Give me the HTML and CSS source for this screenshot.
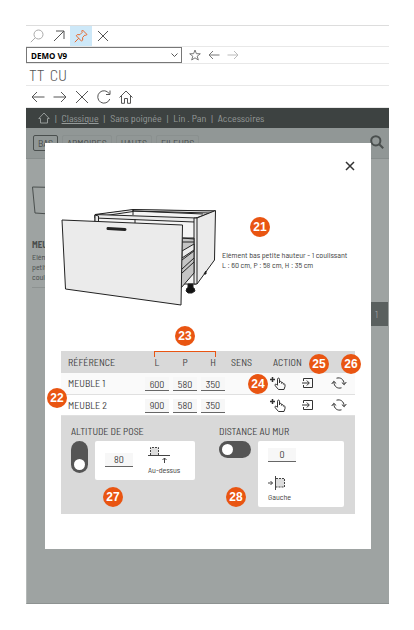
FILE: index.html
```
<!DOCTYPE html>
<html lang="fr">
<head>
    <meta charset="UTF-8">
    <meta name="viewport" content="width=device-width, initial-scale=1.0">
    <title>Catalogue - DEMO V9</title>
    <link rel="stylesheet" href="styles.css">
</head>
<body>
    <!-- Shared icons of the table rows -->
    <svg class="sprite" aria-hidden="true">
        <symbol id="icon-hand" viewBox="0 0 16 14">
            <path d="M0 3.500h5M2.500 1v5" stroke-width="1.500"/>
            <path d="M7.500 9V3.200c0-1.500 2-1.500 2 0V6.500M9.500 7V6c.3-1 2-.8 2 .3V7.500M11.500 7.200c.3-1 1.800-.7 1.800.3v.8c.4-.8 1.700-.5 1.700.5v1.700l-1 3H8.500L5.300 9.800c-1-1.200.3-2.200 1.300-1.300l1 1"/>
        </symbol>
        <symbol id="icon-insert" viewBox="0 0 12 12">
            <path d="M1.500 4V1.500h9v9h-9V8M0 6h7M4.800 3.500L7.300 6L4.800 8.500"/>
        </symbol>
        <symbol id="icon-swap" viewBox="0 0 16 12">
            <path d="M5.500 1.200C9.500 0 13 2.300 13.200 7.300M10.800 5.500l2.400 2.200L15.300 5M10.500 10.800C6.500 12 3 9.700 2.800 4.700M.7 7L2.800 4.300l2.400 2.200"/>
        </symbol>
    </svg>

    <div class="app">
        <div class="toolbar toolbar-window">
            <button class="tool tool-light" aria-label="Rechercher">
                <svg width="14" height="14" viewBox="0 0 14 14"><circle cx="8.500" cy="5.500" r="4.500"/><path d="M5.300 8.700L.8 13.200"/></svg>
            </button>
            <button class="tool" aria-label="Agrandir">
                <svg width="12" height="12" viewBox="0 0 12 12"><path d="M1 11L11 1M3 1h8v8"/></svg>
            </button>
            <button class="tool tool-pinned" aria-label="Épingler">
                <svg width="14" height="14" viewBox="0 0 14 14"><path d="M8.500 1l4.500 4.500-1.300.8-.9-.2-2.200 2.400.1 2.600-1.200 1L2.300 6.800l1-1.200 2.600.1L8.200 3.400 7.800 2.200zM4.800 9.200L.8 13.200"/></svg>
            </button>
            <button class="tool" aria-label="Fermer">
                <svg width="12" height="12" viewBox="0 0 12 12"><path d="M1 1l10 10M11 1L1 11"/></svg>
            </button>
        </div>

        <div class="toolbar toolbar-catalog">
            <select class="catalog-select" aria-label="Catalogue">
                <option>DEMO V9</option>
            </select>
            <button class="tool-small" aria-label="Favori">
                <svg width="12" height="12" viewBox="0 0 12 12"><path d="M6 1l1.400 3.700 3.900.1-3.100 2.400 1.100 3.800L6 8.800 2.700 11l1.100-3.800L.7 4.800l3.900-.1z"/></svg>
            </button>
            <button class="tool-small" aria-label="Précédent">
                <svg width="12" height="10" viewBox="0 0 12 10"><path d="M11.500 5H1M5 1L1 5l4 4"/></svg>
            </button>
            <button class="tool-small tool-light" aria-label="Suivant">
                <svg width="12" height="10" viewBox="0 0 12 10"><path d="M.5 5H11M7 1l4 4-4 4"/></svg>
            </button>
        </div>

        <div class="toolbar toolbar-tabs">
            <button class="tab">TT</button>
            <button class="tab">CU</button>
        </div>

        <div class="toolbar toolbar-browser">
            <button class="tool-nav" aria-label="Page précédente">
                <svg width="14" height="12" viewBox="0 0 14 12"><path d="M13.500 6H1M6 1L1 6l5 5"/></svg>
            </button>
            <button class="tool-nav" aria-label="Page suivante">
                <svg width="14" height="12" viewBox="0 0 14 12"><path d="M.5 6H13M8 1l5 5-5 5"/></svg>
            </button>
            <button class="tool-nav" aria-label="Arrêter">
                <svg width="14" height="14" viewBox="0 0 14 14"><path d="M1 1l12 12M13 1L1 13"/></svg>
            </button>
            <button class="tool-nav" aria-label="Actualiser">
                <svg width="14" height="14" viewBox="0 0 14 14"><path d="M12.800 9A6.200 6.200 0 1 1 12.300 3.800M13 .5V4.500H9"/></svg>
            </button>
            <button class="tool-nav" aria-label="Accueil">
                <svg width="14" height="14" viewBox="0 0 14 14"><path d="M.5 7.500L7 1l6.500 6.500M2.500 6v7.300h3V8.500h3v4.800h3V6"/></svg>
            </button>
        </div>

        <nav class="menu">
            <a class="menu-home" href="#" aria-label="Accueil">
                <svg width="12" height="12" viewBox="0 0 12 12"><path d="M.8 6.500L6 1l5.200 5.500H9.500V11h-7V6.500z"/></svg>
            </a>
            <span>|</span>
            <a class="active" href="#">Classique</a>
            <span>|</span>
            <a href="#">Sans poignée</a>
            <span>|</span>
            <a href="#">Lin . Pan</a>
            <span>|</span>
            <a href="#">Accessoires</a>
        </nav>

        <div class="filters">
            <button class="filter selected">BAS</button>
            <button class="filter">ARMOIRES</button>
            <button class="filter">HAUTS</button>
            <button class="filter">FILEURS</button>
            <button class="search" aria-label="Rechercher">
                <svg width="14" height="14" viewBox="0 0 14 14"><circle cx="5.800" cy="5.800" r="4.600"/><path d="M9.200 9.200l4 4"/></svg>
            </button>
        </div>

        <main class="catalog">
            <div class="item">
                <svg class="item-image" width="48" height="30" viewBox="0 0 48 30"><path d="M.5 1L48 2v28L3 27z"/></svg>
                <h2>MEUBLE</h2>
                <p>Elément bas petite hauteur - 1 coulissant</p>
            </div>
            <span class="counter">1</span>
        </main>

        <div class="modal" role="dialog" aria-label="Elément bas petite hauteur">
            <button class="close" aria-label="Fermer">
                <svg width="10" height="10" viewBox="0 0 10 10"><path d="M1 1l8 8M9 1L1 9"/></svg>
            </button>

            <div class="product">
                <svg class="product-image" width="156" height="100" viewBox="0 0 156 100">
                    <!-- cabinet body -->
                    <path class="inside" d="M34 8L72 3 154 4 135 11V77H121L34 22z"/>
                    <path class="panel" d="M72 2.500l82 1.500-5 2-77-2z"/>
                    <path class="panel" d="M34 7.500L72 2.500v2L42 9z"/>
                    <path class="panel" d="M34 7.500l102 3.500-3 4L34 11z"/>
                    <path class="panel" d="M34 8v13h3.500V9z"/>
                    <path class="line" d="M72 3v5M72 4l70 3M74 12v10"/>
                    <path class="panel" d="M136 11l18.500-7.500L153.500 53L136 77h-3V11z"/>
                    <path class="line" d="M136 11v66"/>
                    <!-- drawer box and slides -->
                    <path class="slide" d="M121 31h12v35l-13 15z"/>
                    <path class="panel" d="M121 44l12-7v6l-12 8z"/>
                    <path class="line" d="M121 31l12 1M121 35h12M121 53l12-9M121 62l12-11M121 66l12-11"/>
                    <!-- feet -->
                    <path class="foot" d="M127 77h5v4h1l1 3-3 2h-4l-2-2 1-3h1zM143 67l2-3v3z"/>
                    <!-- front -->
                    <path class="front" d="M1 13l120.500 5L120 98 4.500 82z"/>
                    <path class="handle" d="M47 21.500l17 1"/>
                </svg>
                <div class="product-text">
                    <span class="mark">21</span>
                    <p>Elément bas petite hauteur - 1 coulissant<br>L : 60 cm, P : 58 cm, H : 35 cm</p>
                </div>
            </div>

            <table class="parts">
                <colgroup>
                    <col>
                    <col class="col-size"><col class="col-size"><col class="col-size">
                    <col class="col-side">
                    <col class="col-action"><col class="col-action"><col class="col-swap">
                </colgroup>
                <thead>
                    <tr>
                        <th class="ref">RÉFÉRENCE</th>
                        <th>L</th>
                        <th class="anchor">P<span class="bracket"></span><span class="mark mark-sizes">23</span></th>
                        <th>H</th>
                        <th class="side">SENS</th>
                        <th class="anchor action" colspan="3">ACTION<span class="mark mark-insert">25</span><span class="mark mark-swap">26</span></th>
                    </tr>
                </thead>
                <tbody>
                    <tr>
                        <td class="ref">MEUBLE 1</td>
                        <td><input type="text" value="600" aria-label="L meuble 1"></td>
                        <td><input type="text" value="580" aria-label="P meuble 1"></td>
                        <td><input type="text" value="350" aria-label="H meuble 1"></td>
                        <td></td>
                        <td class="anchor"><span class="mark mark-place">24</span><button class="row-action" aria-label="Placer"><svg width="16" height="14"><use href="#icon-hand"/></svg></button></td>
                        <td><button class="row-action" aria-label="Insérer"><svg width="12" height="12"><use href="#icon-insert"/></svg></button></td>
                        <td><button class="row-action" aria-label="Remplacer"><svg width="16" height="12"><use href="#icon-swap"/></svg></button></td>
                    </tr>
                    <tr>
                        <td class="ref anchor"><span class="mark mark-ref">22</span>MEUBLE 2</td>
                        <td><input type="text" value="900" aria-label="L meuble 2"></td>
                        <td><input type="text" value="580" aria-label="P meuble 2"></td>
                        <td><input type="text" value="350" aria-label="H meuble 2"></td>
                        <td></td>
                        <td><button class="row-action" aria-label="Placer"><svg width="16" height="14"><use href="#icon-hand"/></svg></button></td>
                        <td><button class="row-action" aria-label="Insérer"><svg width="12" height="12"><use href="#icon-insert"/></svg></button></td>
                        <td><button class="row-action" aria-label="Remplacer"><svg width="16" height="12"><use href="#icon-swap"/></svg></button></td>
                    </tr>
                </tbody>
            </table>

            <div class="settings">
                <section class="setting">
                    <label class="setting-title" for="altitude">ALTITUDE DE POSE</label>
                    <div class="setting-body anchor">
                        <input class="switch vertical" type="checkbox" id="altitude">
                        <div class="card">
                            <input type="text" value="80" aria-label="Altitude">
                            <div class="position">
                                <svg width="22" height="18" viewBox="0 0 22 18"><path class="box" d="M2.500 9V1.500h8V9"/><path d="M0 9.500h22M16.500 17v-5M14.500 14l2-2 2 2"/></svg>
                                <span>Au-dessus</span>
                            </div>
                        </div>
                        <span class="mark mark-altitude">27</span>
                    </div>
                </section>
                <section class="setting">
                    <label class="setting-title" for="distance">DISTANCE AU MUR</label>
                    <div class="setting-body anchor">
                        <input class="switch" type="checkbox" id="distance">
                        <div class="card card-column">
                            <input type="text" value="0" aria-label="Distance">
                            <div class="position">
                                <svg width="18" height="14" viewBox="0 0 18 14"><path class="box" d="M8 2.500h8.500v8.500H8"/><path d="M7.500 0v14M0 7h4.500M2.500 5l2 2-2 2"/></svg>
                                <span>Gauche</span>
                            </div>
                        </div>
                        <span class="mark mark-distance">28</span>
                    </div>
                </section>
            </div>
        </div>
    </div>
</body>
</html>
```

FILE: styles.css
```
* {
    margin: 0;
    padding: 0;
    box-sizing: border-box;
}

body {
    background: #fff;
    color: #444;
    font-family: "Barlow Semi Condensed", "Liberation Sans Narrow", Roboto, sans-serif;
    font-size: 8px;
    line-height: 10px;
    min-height: 100vh;
    padding: 25px 25px 26px 26px;
    display: flex;
}

button, input, select {
    font-family: inherit;
    color: inherit;
    background: none;
    border: none;
}

a {
    color: inherit;
    text-decoration: none;
}

svg {
    display: block;
    fill: none;
    stroke: currentColor;
}

.sprite {
    position: absolute;
    width: 0;
    height: 0;
}

.app {
    position: relative;
    flex: 1;
    display: flex;
    flex-direction: column;
    border-top: 1px solid #ddd;
}

/* toolbars */
.toolbar {
    display: flex;
    align-items: center;
    border-bottom: 1px solid #e8e8e8;
    color: #555;
}

.toolbar-window {
    height: 21px;
}

.tool {
    width: 22px;
    height: 20px;
    display: grid;
    place-items: center;
}

.tool-light {
    color: #aaa;
}

.tool-pinned {
    background: #cde8f8;
    color: #e8692f;
}

.toolbar-catalog {
    height: 17px;
    gap: 7px;
}

.catalog-select {
    width: 156px;
    height: 16px;
    border: 1px solid #777;
    padding: 0 4px;
    font-family: "Open Sans", sans-serif;
    font-size: 8px;
    font-weight: bold;
    color: #000;
    appearance: none;
    background: url("data:image/svg+xml,%3Csvg xmlns='http://www.w3.org/2000/svg' width='7' height='4'%3E%3Cpath d='M.5.5l3 3 3-3' fill='none' stroke='%23555'/%3E%3C/svg%3E") no-repeat right 3px center;
}

.tool-small {
    color: #777;
}

.tool-small.tool-light {
    color: #bbb;
}

.toolbar-tabs {
    height: 22px;
    padding-left: 3px;
    gap: 5px;
}

.tab {
    font-size: 16px;
    font-weight: 300;
}

.toolbar-browser {
    height: 22px;
    padding-left: 5px;
    gap: 8px;
}

/* catalogue page behind the dialog */
.menu {
    height: 20px;
    display: flex;
    align-items: center;
    gap: 5px;
    padding-left: 12px;
    background: #3d4241;
    color: #969b9a;
    font-size: 10px;
}

.menu .active {
    text-decoration: underline;
}

.filters {
    height: 31px;
    display: flex;
    align-items: flex-start;
    gap: 4px;
    padding: 7px 5px 0 7px;
    background: #919796;
    border-bottom: 1px solid #878d8c;
    color: #4a4f4e;
}

.filter {
    height: 16px;
    padding: 0 4px;
    border: 1px solid #8a908f;
    border-radius: 2px;
    font-size: 10px;
}

.filter.selected {
    border-color: #4a4f4e;
}

.search {
    margin-left: auto;
}

.search svg {
    stroke-width: 2;
}

.catalog {
    position: relative;
    flex: 1;
    background: #9ea3a2;
    border-left: 1px solid #b4b8b7;
    border-bottom: 1px solid #8d9291;
    padding: 27px 5px;
    color: #4a4f4e;
}

.item {
    width: 56px;
    border-bottom: 1px solid #8d9291;
    padding-bottom: 5px;
}

.item-image {
    margin-bottom: 22px;
}

.item h2 {
    font-size: 9px;
    line-height: 14px;
}

.counter {
    position: absolute;
    top: 143px;
    right: 1px;
    width: 17px;
    background: #5a605f;
    color: #969b9a;
    font-size: 10px;
    line-height: 24px;
    padding-left: 4px;
}

/* dialog */
.modal {
    position: absolute;
    top: 117px;
    left: 19px;
    right: 18px;
    background: #fff;
    padding: 18px 16px 35px;
}

.close {
    display: block;
    margin: 0 0 36px auto;
    color: #333;
}

.close svg {
    stroke-width: 1.5;
}

.product {
    display: flex;
    gap: 5px;
    margin-bottom: 44px;
}

.product-image {
    flex-shrink: 0;
    stroke: #222;
    stroke-width: 1;
    stroke-linejoin: round;
}

.inside, .panel, .front {
    fill: #ebebeb;
}

.inside {
    fill: #f4f4f4;
}

.slide {
    fill: #c4c4c4;
}

.foot {
    fill: #111;
}

.handle {
    stroke-width: 3;
    stroke-linecap: round;
}

.product-text {
    padding-top: 10px;
    white-space: nowrap;
}

.product-text .mark {
    margin: 0 0 13px 28px;
}

/* numbered marks */
.mark {
    display: block;
    width: 20px;
    height: 20px;
    border-radius: 50%;
    background: #e95512;
    color: #fff;
    font: bold 12px/20px "Liberation Sans", sans-serif;
    text-align: center;
}

.anchor {
    position: relative;
}

.anchor > .mark {
    position: absolute;
}

.anchor > .mark-sizes {
    top: -25px;
    left: 4px;
}

.anchor > .mark-insert {
    top: 3px;
    right: 26px;
}

.anchor > .mark-swap {
    top: 3px;
    right: -6px;
}

.anchor > .mark-place {
    top: 1px;
    left: -15px;
}

.anchor > .mark-ref {
    top: -7px;
    left: -14px;
}

.anchor > .mark-altitude {
    top: 46px;
    left: 32px;
}

.anchor > .mark-distance {
    top: 46px;
    left: 7px;
}

.bracket {
    position: absolute;
    top: 0;
    left: -17px;
    right: -17px;
    height: 6px;
    border: 1px solid #e95512;
    border-bottom: none;
}

/* parts table */
.parts {
    width: 100%;
    table-layout: fixed;
    border-collapse: collapse;
    font-size: 10px;
}

.col-size {
    width: 28px;
}

.col-side {
    width: 36px;
}

.col-action {
    width: 30px;
}

.col-swap {
    width: 32px;
}

.parts th {
    height: 22px;
    background: #d9d9d9;
    font-weight: normal;
}

.parts td {
    height: 21px;
    text-align: center;
    border-bottom: 1px solid #e0e0e0;
}

.parts tbody tr:first-child {
    background: #fafafa;
}

.parts .ref {
    text-align: left;
    padding-left: 7px;
}

.parts .side {
    text-align: left;
    padding-left: 4px;
}

.parts .action {
    text-align: left;
    padding-left: 10px;
}

.modal input[type="text"] {
    display: block;
    width: 24px;
    height: 14px;
    margin: 2px auto 0;
    background: #f7f7f7;
    border-bottom: 1px solid #666;
    font-size: 10px;
    text-align: center;
}

.row-action {
    display: block;
    margin: 0 auto;
    color: #333;
}

/* settings */
.settings {
    display: grid;
    grid-template-columns: 148px 1fr;
    background: #d9d9d9;
    padding: 10px 10px 7px;
}

.setting-title {
    display: block;
    font-size: 10px;
    margin-bottom: 5px;
}

.setting-body {
    display: flex;
    align-items: flex-start;
    gap: 7px;
}

.switch {
    appearance: none;
    display: flex;
    flex-shrink: 0;
    width: 32px;
    height: 17px;
    padding: 3px;
    border-radius: 9px;
    background: #555;
}

.switch::before {
    content: "";
    width: 11px;
    height: 11px;
    border-radius: 50%;
    background: #fff;
}

.switch.vertical {
    width: 17px;
    height: 32px;
    align-items: flex-end;
}

.card {
    display: flex;
    align-items: flex-start;
    gap: 15px;
    min-width: 100px;
    padding: 5px 10px;
    border-radius: 2px;
    background: #fff;
}

.modal .card input[type="text"] {
    width: 28px;
    margin: 7px 0 0;
}

.card-column {
    min-width: 86px;
    flex-direction: column;
    gap: 14px;
    padding: 0 10px 5px;
}

.position span {
    display: block;
    margin-top: 1px;
}

.card-column .position span {
    margin-top: 2px;
}

.box {
    fill: #ddd;
    stroke-dasharray: 2 1;
}
```
